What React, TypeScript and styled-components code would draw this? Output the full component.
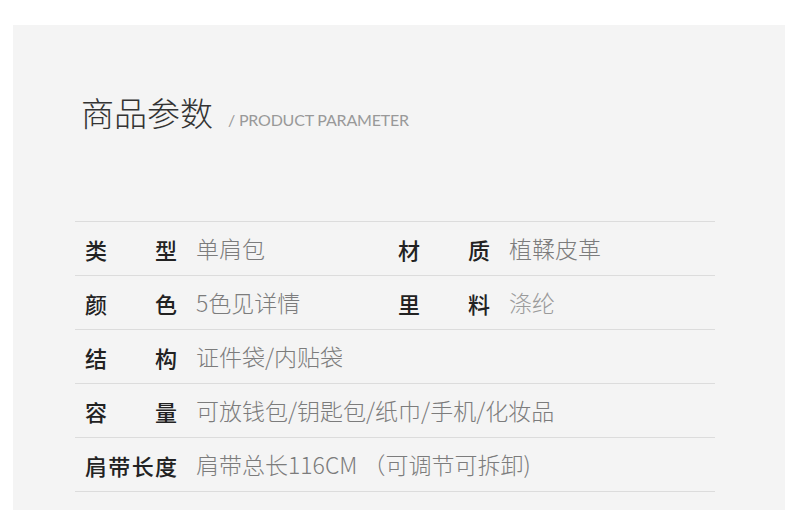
import React from "react";
import styled, { createGlobalStyle } from "styled-components";

const Global = createGlobalStyle`
  html, body { margin: 0; padding: 0; background: #ffffff; }
  body { font-family: "Noto Sans CJK SC", "Noto Sans", sans-serif; }
`;

const Page = styled.div`
  width: 800px;
  height: 510px;
  overflow: hidden;
  padding: 25px 15px 0 13px;
  box-sizing: border-box;
`;

const Panel = styled.section`
  background: #f4f4f4;
  height: 100%;
  padding: 67px 0 0 62px;
  box-sizing: border-box;
`;

const TitleRow = styled.div`
  display: flex;
  align-items: baseline;
  gap: 15px;
  height: 40px;
  padding-left: 6px;
`;

const Title = styled.h1`
  margin: 0;
  font-family: "Noto Sans CJK SC", sans-serif;
  font-weight: 300;
  font-size: 33px;
  line-height: 40px;
  color: #333;
`;

const Subtitle = styled.span`
  font-family: Lato, "Open Sans", sans-serif;
  font-size: 16px;
  font-weight: 400;
  color: #999;
  letter-spacing: -0.2px;
`;

const Table = styled.div`
  margin-top: 89px;
  width: 640px;
  border-top: 1px solid #dcdcdc;
`;

const Row = styled.div`
  display: grid;
  grid-template-columns: 313px 1fr;
  height: 54px;
  border-bottom: 1px solid #dcdcdc;
  box-sizing: border-box;
`;

const Cell = styled.div`
  display: flex;
  align-items: center;
  padding-left: 10px;
`;

const Label = styled.span`
  flex: 0 0 92px;
  width: 92px;
  margin-right: 19px;
  font-size: 22px;
  font-weight: 500;
  color: #222;
  text-align: justify;
  text-align-last: justify;
  line-height: 1;
  white-space: nowrap;
`;

const Value = styled.span<{ $light?: boolean }>`
  font-size: 23px;
  font-weight: 300;
  color: ${(p) => (p.$light ? "#9a9a9a" : "#7c7c7c")};
  line-height: 1;
  white-space: pre;
`;

type Item = { label: string; value: string; light?: boolean };

const rows: Item[][] = [
  [
    { label: "类型", value: "单肩包" },
    { label: "材质", value: "植鞣皮革" },
  ],
  [
    { label: "颜色", value: "5色见详情" },
    { label: "里料", value: "涤纶", light: true },
  ],
  [{ label: "结构", value: "证件袋/内贴袋" }],
  [{ label: "容量", value: "可放钱包/钥匙包/纸巾/手机/化妆品" }],
  [{ label: "肩带长度", value: "肩带总长116CM （可调节可拆卸)" }],
];

export default function App() {
  return (
    <>
      <Global />
      <Page>
        <Panel>
          <TitleRow>
            <Title>商品参数</Title>
            <Subtitle>/ PRODUCT PARAMETER</Subtitle>
          </TitleRow>
          <Table>
            {rows.map((r, i) => (
              <Row key={i}>
                {r.map((c, j) => (
                  <Cell key={j}>
                    <Label>{c.label}</Label>
                    <Value $light={c.light}>{c.value}</Value>
                  </Cell>
                ))}
              </Row>
            ))}
          </Table>
        </Panel>
      </Page>
    </>
  );
}
